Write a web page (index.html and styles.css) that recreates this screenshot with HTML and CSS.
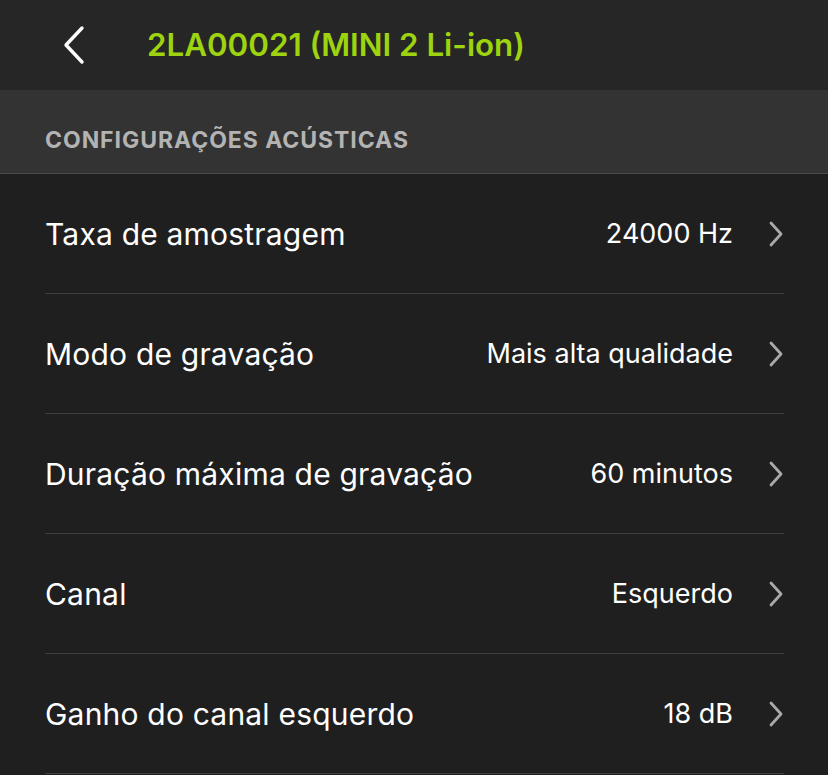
FILE: index.html
```html
<!DOCTYPE html>
<html lang="pt">
  <head>
    <meta charset="UTF-8" />
    <meta name="viewport" content="width=device-width, initial-scale=1.0" />
    <title>2LA00021 (MINI 2 Li-ion)</title>
    <link rel="stylesheet" href="styles.css">
  </head>
  <body>
    <div class="top--bar">
      <a class="back--btn">
        <svg width="24" height="40" viewBox="0 0 24 40">
          <path d="M20 3 L4 20 L20 37" fill="none" stroke="#fff" stroke-width="3.4" stroke-linecap="round" stroke-linejoin="round" />
        </svg>
      </a>
      <h1 class="device--name">2LA00021 (MINI 2 Li-ion)</h1>
    </div>

    <div class="section--head">CONFIGURAÇÕES ACÚSTICAS</div>

    <ul class="settings--list">
      <li class="setting">
        <span class="label">Taxa de amostragem</span>
        <span class="value">24000 Hz</span>
        <svg class="chevron" width="16" height="26" viewBox="0 0 16 26">
          <path d="M3 2 L13 13 L3 24" fill="none" stroke="#a9a9a9" stroke-width="2.8" stroke-linecap="round" stroke-linejoin="round" />
        </svg>
      </li>
      <li class="setting">
        <span class="label">Modo de gravação</span>
        <span class="value">Mais alta qualidade</span>
        <svg class="chevron" width="16" height="26" viewBox="0 0 16 26">
          <path d="M3 2 L13 13 L3 24" fill="none" stroke="#a9a9a9" stroke-width="2.8" stroke-linecap="round" stroke-linejoin="round" />
        </svg>
      </li>
      <li class="setting">
        <span class="label">Duração máxima de gravação</span>
        <span class="value">60 minutos</span>
        <svg class="chevron" width="16" height="26" viewBox="0 0 16 26">
          <path d="M3 2 L13 13 L3 24" fill="none" stroke="#a9a9a9" stroke-width="2.8" stroke-linecap="round" stroke-linejoin="round" />
        </svg>
      </li>
      <li class="setting">
        <span class="label">Canal</span>
        <span class="value">Esquerdo</span>
        <svg class="chevron" width="16" height="26" viewBox="0 0 16 26">
          <path d="M3 2 L13 13 L3 24" fill="none" stroke="#a9a9a9" stroke-width="2.8" stroke-linecap="round" stroke-linejoin="round" />
        </svg>
      </li>
      <li class="setting">
        <span class="label">Ganho do canal esquerdo</span>
        <span class="value">18 dB</span>
        <svg class="chevron" width="16" height="26" viewBox="0 0 16 26">
          <path d="M3 2 L13 13 L3 24" fill="none" stroke="#a9a9a9" stroke-width="2.8" stroke-linecap="round" stroke-linejoin="round" />
        </svg>
      </li>
    </ul>
  </body>
</html>
```

FILE: styles.css
```css
* {
  box-sizing: border-box;
  padding: 0;
  margin: 0;
  font-family: Inter, "Noto Sans", sans-serif;
}
body {
  background-color: #1f1f1f;
  color: #fff;
  height: 775px;
  overflow: hidden;
}
.top--bar {
  height: 90px;
  background-color: #262626;
  display: flex;
  align-items: center;
  padding-left: 62px;
  gap: 61px;
}
.back--btn {
  display: flex;
  cursor: pointer;
}
.device--name {
  font-size: 31.3px;
  font-weight: 600;
  color: #9ed30f;
}
.section--head {
  height: 84px;
  background-color: #333;
  border-bottom: 1px solid #4a4a4a;
  padding: 36px 0 0 45px;
  font-size: 23px;
  font-weight: 700;
  color: #b3b3b3;
  letter-spacing: 0.95px;
}
.settings--list {
  list-style: none;
  padding: 0 44px 0 45px;
}
.setting {
  display: flex;
  align-items: center;
  height: 120px;
  border-bottom: 1px solid #3f3f3f;
}
.setting .label {
  flex: 1;
  font-size: 30px;
  letter-spacing: 0.2px;
}
.setting .value {
  font-size: 27px;
  margin-right: 35px;
}
```
